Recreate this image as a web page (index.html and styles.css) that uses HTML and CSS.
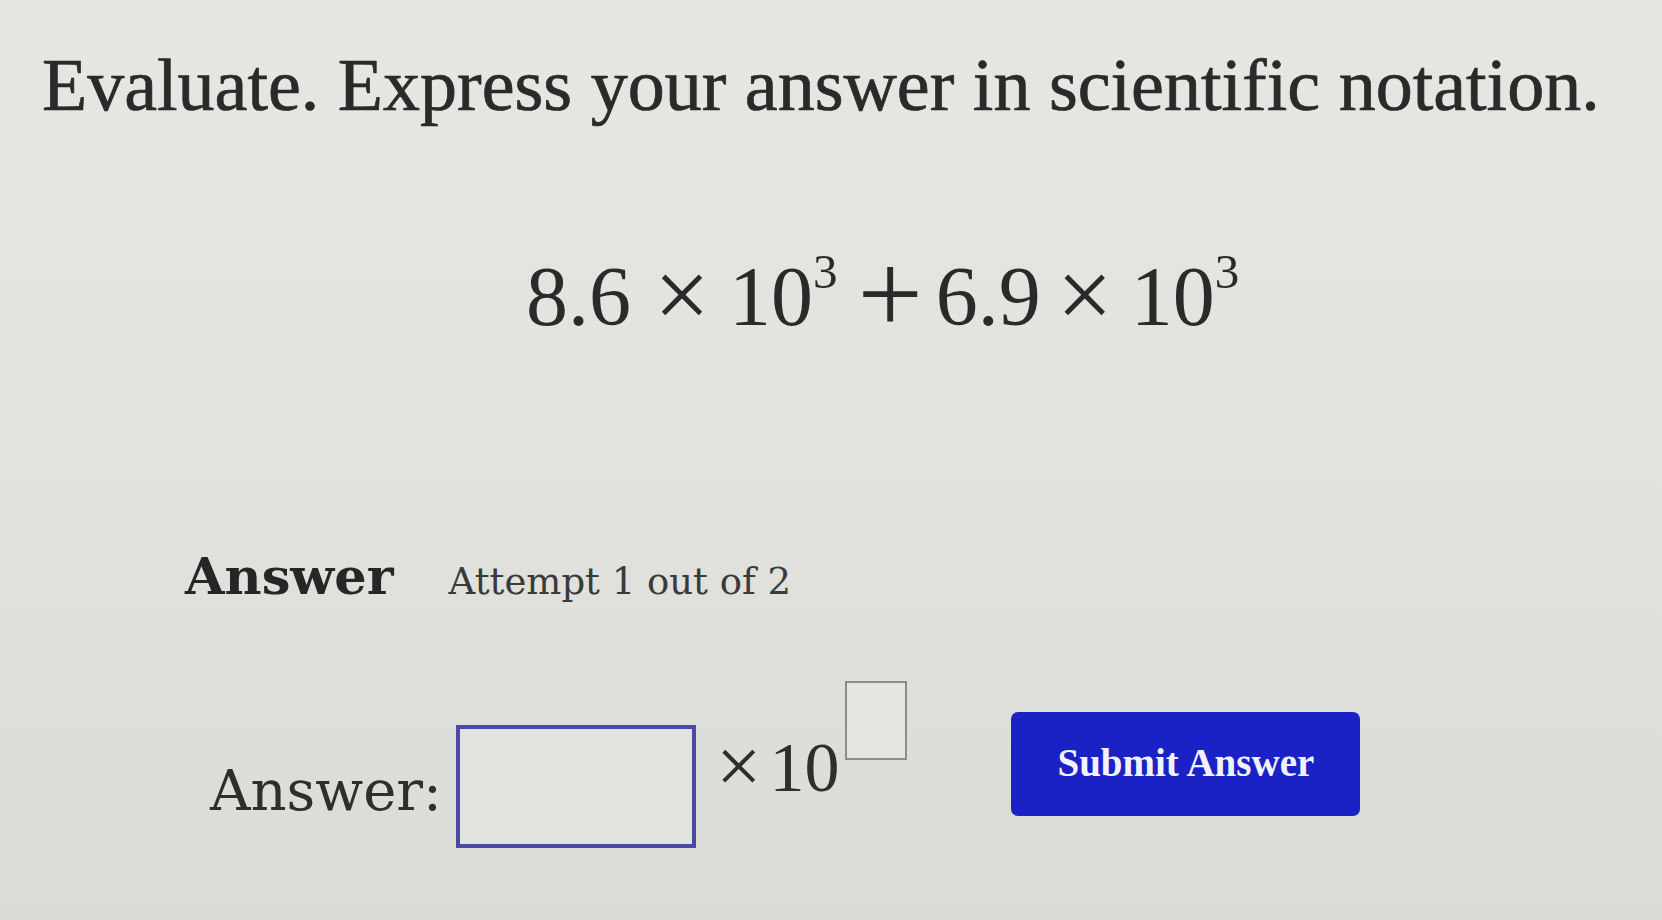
FILE: index.html
```html
<!DOCTYPE html>
<html lang="en">
<head>
<meta charset="utf-8">
<title>Evaluate</title>
<link rel="stylesheet" href="styles.css">
</head>
<body>
<div class="page">
  <h1 class="title">Evaluate. Express your answer in scientific notation.</h1>
  <div class="math"><span class="num">8.6</span><span class="op times t1">×</span><span class="num">10</span><span class="sup">3</span><span class="op plus">+</span><span class="num">6.9</span><span class="op times t2">×</span><span class="num">10</span><span class="sup">3</span></div>
  <div class="answer-head">
    <span class="head-strong">Answer</span>
    <span class="attempt">Attempt 1 out of 2</span>
  </div>
  <div class="answer-row">
    <span class="answer-label">Answer:</span>
    <span class="input-box"></span>
    <span class="times10"><span class="x">×</span>10</span>
    <span class="exp-box"></span>
    <button class="submit" type="button">Submit Answer</button>
  </div>
</div>
</body>
</html>
```

FILE: styles.css
```css
html, body {
  margin: 0;
  height: 100%;
}

body {
  background: linear-gradient(to bottom, #e6e7e2 0%, #e1e2dd 55%, #dadbd5 100%);
  color: #2c2c2c;
  font-family: "Liberation Serif", "Times New Roman", serif;
  overflow: hidden;
}

.page {
  padding: 48px 0 0 42px;
}

.title {
  margin: 0;
  font-family: "Liberation Serif", serif;
  font-weight: 400;
  font-size: 74px;
  line-height: 1;
  white-space: nowrap;
  color: #2a2a2a;
  -webkit-text-stroke: 0.7px #2a2a2a;
}

.math {
  margin: 133px 0 0 484px;
  font-family: "Liberation Serif", serif;
  font-size: 84px;
  line-height: 1;
  height: 84px;
  white-space: nowrap;
  color: #2a2a2a;
}

.op {
  line-height: 0;
}

.times {
  font-size: 1.18em;
  vertical-align: -3px;
}

.times.t1 {
  margin: 0 19px 0 23px;
}

.times.t2 {
  margin: 0 18px 0 16px;
}

.plus {
  font-size: 1.38em;
  vertical-align: -8px;
  margin: 0 13px 0 20px;
}

.sup {
  font-size: 49px;
  line-height: 0;
  vertical-align: 37px;
}

.answer-head {
  display: flex;
  align-items: baseline;
  gap: 55px;
  margin: 212px 0 0 143px;
  line-height: 1;
}

.head-strong {
  font-family: "DejaVu Serif", serif;
  font-weight: 700;
  font-size: 51px;
  color: #262626;
}

.attempt {
  font-family: "DejaVu Serif", serif;
  font-size: 37px;
  color: #3a3a3a;
}

.answer-row {
  display: flex;
  align-items: flex-start;
  margin: 79px 0 0 168px;
}

.answer-label {
  font-family: "DejaVu Serif", serif;
  font-size: 56px;
  line-height: 1;
  margin-top: 82px;
  color: #2e2e2e;
}

.input-box {
  box-sizing: border-box;
  width: 240px;
  height: 123px;
  margin: 44px 0 0 14px;
  border: 4px solid #4a4aa6;
  background: #e2e3de;
}

.times10 {
  font-family: "Liberation Serif", serif;
  font-size: 70px;
  line-height: 1;
  margin: 52px 0 0 20px;
  color: #2e2e2e;
}

.times10 .x {
  font-size: 1.15em;
  line-height: 0;
  vertical-align: -2px;
  margin-right: 8px;
}

.exp-box {
  box-sizing: border-box;
  width: 62px;
  height: 79px;
  margin-left: 6px;
  border: 2px solid #8c8c8a;
  background: #e4e5e0;
}

.submit {
  box-sizing: border-box;
  width: 349px;
  height: 104px;
  margin: 31px 0 0 104px;
  border: 0;
  border-radius: 7px;
  background: #1a22c6;
  color: #f2f2ff;
  font-family: "Liberation Serif", serif;
  font-weight: 700;
  font-size: 39px;
  padding: 0 0 4px;
  line-height: 1;
}
```
